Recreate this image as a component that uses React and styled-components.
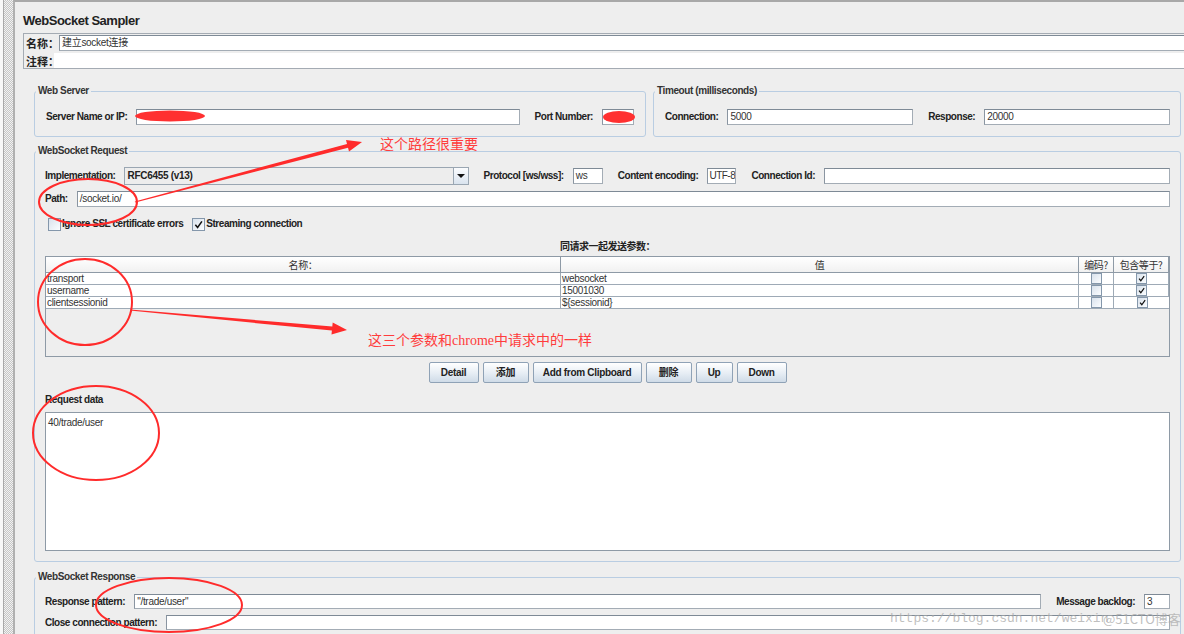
import React from 'react';
import styled, { createGlobalStyle } from 'styled-components';

const GlobalStyle = createGlobalStyle`
  html, body { margin: 0; padding: 0; background: #eeeeee; }
  body { font-family: "Liberation Sans", Arial, "Noto Sans CJK SC", sans-serif; color: #222; }
  * { box-sizing: border-box; }
`;

const SANS = '"Liberation Sans", Arial, "Noto Sans CJK SC", sans-serif';
const CJK = '"Noto Sans CJK SC", "Liberation Sans", sans-serif';

const Page = styled.div`
  position: relative;
  width: 1184px;
  height: 634px;
  overflow: hidden;
  display: flex;
  background: #eeeeee;
`;

const TreeEdge = styled.div`
  width: 4px;
  background: #f8f8f8;
  border-right: 1px solid #a9a9a9;
`;

const Splitter = styled.div`
  width: 9px;
  background: repeating-conic-gradient(#c6c6c6 0 25%, #f2f2f2 0 50%) 0 0 / 2px 2px;
`;

const Main = styled.main`
  flex: 1;
  min-width: 0;
  border-left: 2px solid #b0b0b0;
  border-top: 2px solid #a8a8a8;
  padding: 9px 3px 0 8px;
  display: flex;
  flex-direction: column;
`;

const Title = styled.h1`
  margin: 0;
  font: bold 13px/20px ${SANS};
  letter-spacing: -0.5px;
  color: #222;
`;

const NameBox = styled.div`
  margin: 2px -12px 0 0;
  border: 1px solid #a4abb3;
  padding: 1px 0 0 1px;
  display: flex;
  flex-direction: column;
  gap: 2px;
`;

const NameRow = styled.div`
  display: flex;
  align-items: center;
  height: ${p => p.$h}px;
`;

const CjkLabel = styled.span`
  font: bold 11px/14px ${CJK};
  padding-left: 1px;
  white-space: nowrap;
  color: #222;
`;

const Field = styled.div`
  height: ${p => p.$h || 16}px;
  width: ${p => (p.$w ? `${p.$w}px` : 'auto')};
  flex: ${p => (p.$w ? 'none' : 1)};
  min-width: 0;
  margin-left: ${p => p.$ml || 0}px;
  background: #fff;
  border: ${p => (p.$bare ? 'none' : '1px solid #a3acb5')};
  border-top-color: #7e8a96;
  border-left-color: #8a95a1;
  padding: 0 ${p => (p.$tight ? 1 : 2)}px;
  font: 10px/14px ${SANS};
  letter-spacing: ${p => (p.$tight ? '-0.5px' : '-0.3px')};
  color: #333;
  white-space: nowrap;
  overflow: hidden;
`;

const Sections = styled.div`
  margin: 15px 0 0 11px;
  display: flex;
  flex-direction: column;
`;

const TopRow = styled.div`
  display: flex;
  gap: 7px;
`;

const Group = styled.fieldset`
  margin: ${p => p.$mt || 0}px 0 0 0;
  padding: 0;
  min-width: 0;
  width: ${p => (p.$w ? `${p.$w}px` : 'auto')};
  flex: ${p => (p.$w ? 'none' : 1)};
  border: 1px solid #b9cde2;
  border-radius: 3px;
`;

const Legend = styled.legend`
  margin-left: 1px;
  padding: 0 2px;
  font: bold 10px/14px ${SANS};
  letter-spacing: -0.4px;
  color: #333;
`;

const Body = styled.div`
  padding: ${p => p.$pad};
  display: flex;
  flex-direction: column;
`;

const Row = styled.div`
  display: flex;
  align-items: center;
  gap: 9px;
  height: ${p => p.$h || 16}px;
  margin-top: ${p => p.$mt || 0}px;
`;

const Label = styled.span`
  font: bold 10px/14px ${SANS};
  letter-spacing: -0.45px;
  color: #222;
  white-space: nowrap;
  margin-left: ${p => p.$gap || 0}px;
`;

const Combo = styled.div`
  width: 345px;
  height: 18px;
  display: flex;
  border: 1px solid #9aa6b2;
  background: #ededed;
`;

const ComboText = styled.span`
  flex: 1;
  padding-left: 2px;
  font: bold 10px/16px ${SANS};
  letter-spacing: -0.3px;
  color: #222;
`;

const ComboArrow = styled.span`
  width: 15px;
  border-left: 1px solid #9aa6b2;
  background: linear-gradient(#fbfcfe, #d9e3ee);
  display: flex;
  align-items: center;
  justify-content: center;
  &::after {
    content: '';
    border-left: 4px solid transparent;
    border-right: 4px solid transparent;
    border-top: 4px solid #111;
  }
`;

const CheckRow = styled.div`
  display: flex;
  align-items: center;
  height: 16px;
  margin: 9px 0 0 3px;
`;

const Box = styled.span`
  width: ${p => p.$s}px;
  height: ${p => p.$s}px;
  flex: none;
  border: 1px solid #8497ab;
  background: linear-gradient(135deg, #d9e2ec, #fbfdff);
  display: inline-flex;
  align-items: center;
  justify-content: center;
`;

const CheckText = styled.span`
  font: bold 10px/14px ${SANS};
  letter-spacing: -0.45px;
  color: #222;
  margin: 0 9px 0 1px;
`;

const Caption = styled.div`
  margin-top: 8px;
  text-align: center;
  font: bold 10px/12px ${CJK};
  letter-spacing: -0.5px;
  color: #222;
`;

const TablePane = styled.div`
  margin-top: 4px;
  height: 101px;
  border: 1px solid #8e9aa6;
  background: #eeeeee;
`;

const Grid = styled.div`
  display: grid;
  grid-template-columns: 515px 518px 35px 1fr;
`;

const HeadCell = styled.div`
  height: 16px;
  border-right: 1px solid #8e9aa6;
  border-bottom: 1px solid #8e9aa6;
  background: linear-gradient(#ffffff, #f1f1f1);
  text-align: center;
  font: 10px/15px ${CJK};
  letter-spacing: -0.4px;
  color: #333;
  &:last-child { border-right: none; }
`;

const Cell = styled.div`
  height: 12px;
  border-right: 1px solid #9eaab6;
  border-bottom: 1px solid #9eaab6;
  background: #fff;
  padding-left: 1px;
  font: 10px/11px ${SANS};
  letter-spacing: -0.3px;
  color: #333;
  display: flex;
  align-items: center;
  justify-content: ${p => (p.$center ? 'center' : 'flex-start')};
  &:last-child { border-right: none; }
`;

const Buttons = styled.div`
  margin-top: 5px;
  display: flex;
  justify-content: center;
  gap: 4px;
`;

const Btn = styled.button`
  width: ${p => p.$w}px;
  height: 21px;
  padding: 0;
  border: 1px solid #8fa2b6;
  border-radius: 2px;
  background: linear-gradient(#ffffff, #e6edf4 55%, #cfdbe7);
  font: bold 10px/19px ${SANS};
  letter-spacing: -0.3px;
  color: #222;
`;

const DataLabel = styled.div`
  margin-top: 11px;
  font: bold 10px/12px ${SANS};
  letter-spacing: -0.4px;
  color: #222;
`;

const TextArea = styled.div`
  margin-top: 6px;
  height: 139px;
  background: #fff;
  border: 1px solid #8e9aa6;
  padding: 3px 2px;
  font: 10px/13px ${SANS};
  letter-spacing: -0.3px;
  color: #333;
`;

const Overlay = styled.svg`
  position: absolute;
  left: 0;
  top: 0;
  pointer-events: none;
`;

const Note = styled.span`
  position: absolute;
  left: ${p => p.$x}px;
  top: ${p => p.$y}px;
  font: 14px/16px "Liberation Serif", ${CJK};
  color: #ff3c3c;
  white-space: nowrap;
`;

const Watermark = styled.span`
  position: absolute;
  left: ${p => p.$x}px;
  top: 611px;
  font: 13px/16px ${p => (p.$mono ? '"Liberation Mono", monospace' : CJK)};
  color: rgba(170, 170, 170, 0.75);
  white-space: nowrap;
`;

function Check({ on, size = 13 }) {
  return (
    <Box $s={size}>
      {on && (
        <svg width={size - 4} height={size - 4} viewBox="0 0 10 10">
          <path d="M1.5 5.2 L4 8.2 L8.8 1.5" stroke="#111" strokeWidth="1.7" fill="none" />
        </svg>
      )}
    </Box>
  );
}

const params = [
  ['transport', 'websocket'],
  ['username', '15001030'],
  ['clientsessionid', '${sessionid}'],
];

export default function App() {
  return (
    <Page>
      <GlobalStyle />
      <TreeEdge />
      <Splitter />
      <Main>
        <Title>WebSocket Sampler</Title>
        <NameBox>
          <NameRow $h={16}>
            <CjkLabel>名称：</CjkLabel>
            <Field>建立socket连接</Field>
          </NameRow>
          <NameRow $h={15}>
            <CjkLabel>注释：</CjkLabel>
            <Field $bare $ml={-5} $h={15} />
          </NameRow>
        </NameBox>

        <Sections>
          <TopRow>
            <Group $w={612}>
              <Legend>Web Server</Legend>
              <Body $pad="11px 11px 11px 11px">
                <Row>
                  <Label>Server Name or IP:</Label>
                  <Field />
                  <Label $gap={6}>Port Number:</Label>
                  <Field $w={32} />
                </Row>
              </Body>
            </Group>
            <Group>
              <Legend>Timeout (milliseconds)</Legend>
              <Body $pad="11px 10px 11px 11px">
                <Row>
                  <Label>Connection:</Label>
                  <Field>5000</Field>
                  <Label $gap={6}>Response:</Label>
                  <Field>20000</Field>
                </Row>
              </Body>
            </Group>
          </TopRow>

          <Group $mt={7}>
            <Legend>WebSocket Request</Legend>
            <Body $pad="9px 10px 10px 10px">
              <Row $h={18}>
                <Label>Implementation:</Label>
                <Combo>
                  <ComboText>RFC6455 (v13)</ComboText>
                  <ComboArrow />
                </Combo>
                <Label $gap={5}>Protocol [ws/wss]:</Label>
                <Field $w={30}>ws</Field>
                <Label $gap={6}>Content encoding:</Label>
                <Field $w={29} $tight>UTF-8</Field>
                <Label $gap={6}>Connection Id:</Label>
                <Field />
              </Row>
              <Row $mt={6}>
                <Label>Path:</Label>
                <Field>/socket.io/</Field>
              </Row>
              <CheckRow>
                <Check />
                <CheckText>Ignore SSL certificate errors</CheckText>
                <Check on />
                <CheckText>Streaming connection</CheckText>
              </CheckRow>
              <Caption>同请求一起发送参数：</Caption>
              <TablePane>
                <Grid>
                  <HeadCell>名称：</HeadCell>
                  <HeadCell>值</HeadCell>
                  <HeadCell>编码?</HeadCell>
                  <HeadCell>包含等于?</HeadCell>
                  {params.map(([name, value]) => (
                    <React.Fragment key={name}>
                      <Cell>{name}</Cell>
                      <Cell>{value}</Cell>
                      <Cell $center><Check size={11} /></Cell>
                      <Cell $center><Check size={11} on /></Cell>
                    </React.Fragment>
                  ))}
                </Grid>
              </TablePane>
              <Buttons>
                <Btn $w={50}>Detail</Btn>
                <Btn $w={46}>添加</Btn>
                <Btn $w={109}>Add from Clipboard</Btn>
                <Btn $w={46}>删除</Btn>
                <Btn $w={37}>Up</Btn>
                <Btn $w={50}>Down</Btn>
              </Buttons>
              <DataLabel>Request data</DataLabel>
              <TextArea>40/trade/user</TextArea>
            </Body>
          </Group>

          <Group $mt={8}>
            <Legend>WebSocket Response</Legend>
            <Body $pad="10px 10px 10px 10px">
              <Row $h={15}>
                <Label>Response pattern:</Label>
                <Field $h={15} $w={907}>"/trade/user"</Field>
                <Label $gap={6}>Message backlog:</Label>
                <Field $h={15}>3</Field>
              </Row>
              <Row $h={15} $mt={6}>
                <Label>Close connection pattern:</Label>
                <Field $h={15} />
              </Row>
            </Body>
          </Group>
        </Sections>
      </Main>

      <Overlay width="1184" height="634" viewBox="0 0 1184 634">
        <ellipse cx="170" cy="116" rx="35" ry="5.5" fill="#ff3030" />
        <ellipse cx="619" cy="117" rx="16" ry="6" fill="#ff3030" />
        <g fill="none" stroke="#ff2b2b" strokeWidth="2">
          <ellipse cx="88" cy="202" rx="49" ry="23" />
          <ellipse cx="85" cy="302" rx="47" ry="43" />
          <ellipse cx="96" cy="433" rx="63" ry="47" />
          <ellipse cx="169" cy="605" rx="73" ry="27" />
        </g>
        <g fill="#ff2b2b">
          <polygon points="134.8,201.4 347.0,143.9 346.0,140.0 362,142 349.0,151.6 348.0,147.7 135.2,202.6" />
          <polygon points="130.1,309.4 332.3,326.6 332.7,322.6 347,330 331.5,334.6 331.9,330.6 129.9,310.6" />
        </g>
      </Overlay>
      <Note $x={380} $y={137}>这个路径很重要</Note>
      <Note $x={368} $y={333}>这三个参数和chrome中请求中的一样</Note>
      <Watermark $x={890} $mono>https://blog.csdn.net/weixin</Watermark>
      <Watermark $x={1103}>@51CTO博客</Watermark>
    </Page>
  );
}
